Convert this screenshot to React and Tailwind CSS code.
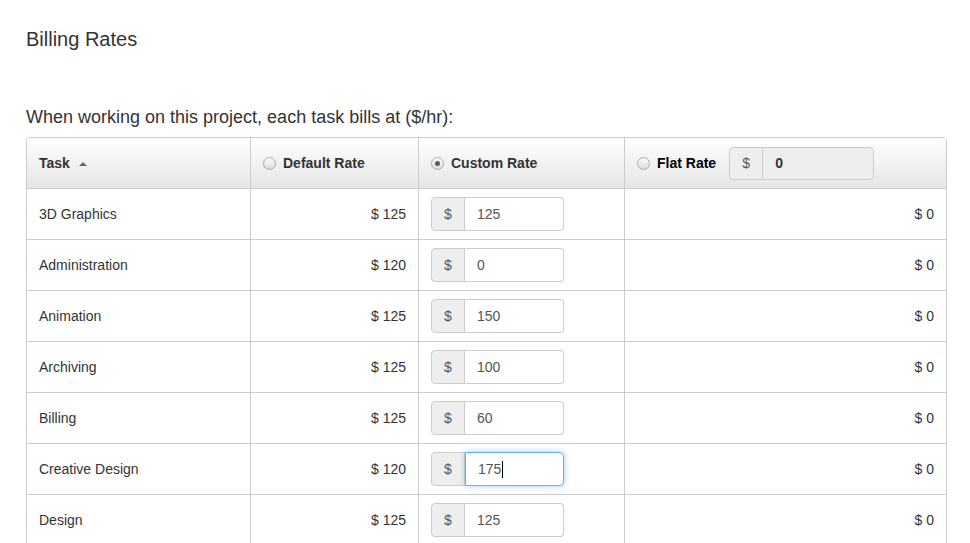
import React from 'react';

const rows = [
  { task: '3D Graphics', def: 125, custom: '125' },
  { task: 'Administration', def: 120, custom: '0' },
  { task: 'Animation', def: 125, custom: '150' },
  { task: 'Archiving', def: 125, custom: '100' },
  { task: 'Billing', def: 125, custom: '60' },
  { task: 'Creative Design', def: 120, custom: '175', focused: true },
  { task: 'Design', def: 125, custom: '125' },
];

const Radio = ({ checked }) => (
  <span className="relative inline-block w-[13px] h-[13px] rounded-full border border-[#a9a9a9] bg-gradient-to-b from-[#fbfbfb] to-[#dcdcdc] flex-shrink-0">
    {checked && <span className="absolute left-[3px] top-[3px] w-[5px] h-[5px] rounded-full bg-[#5a5a5a]" />}
  </span>
);

const Cell = ({ className = '', children }) => (
  <div className={`h-[50px] flex items-center px-3 ${className}`}>{children}</div>
);

export default function App() {
  return (
    <div className="w-[970px] h-[543px] overflow-hidden bg-white text-[#333] font-['Liberation_Sans',Arial,sans-serif]">
      <div className="pl-[26px] pt-[28px]">
        <h2 className="text-[20px] leading-[22px]">Billing Rates</h2>
        <p className="mt-[57px] text-[18px] leading-[20px]">When working on this project, each task bills at ($/hr):</p>

        <div className="mt-[10px] w-[921px] border border-[#ccc] rounded-t-[4px] overflow-hidden">
          <div className="grid grid-cols-[223px_168px_206px_322px] bg-gradient-to-b from-white to-[#e6e6e6] border-b border-[#ccc] text-[14px] font-bold">
            <Cell className="gap-[9px]">
              <span>Task</span>
              <span className="w-0 h-0 border-x-[4px] border-x-transparent border-b-[4px] border-b-[#666] mt-[1px]" />
            </Cell>
            <Cell className="border-l border-[#ccc] gap-[7px]">
              <Radio /> <span>Default Rate</span>
            </Cell>
            <Cell className="border-l border-[#ccc] gap-[7px]">
              <Radio checked /> <span>Custom Rate</span>
            </Cell>
            <Cell className="border-l border-[#ccc] gap-[7px]">
              <Radio /> <span className="text-black">Flat Rate</span>
              <div className="ml-[6px] flex h-[33px] w-[145px] border border-[#ccc] rounded-[4px] bg-[#eee] overflow-hidden">
                <span className="w-[33px] flex items-center justify-center border-r border-[#ccc] text-[#555] font-normal">$</span>
                <span className="flex items-center pl-[12px] text-[#333]">0</span>
              </div>
            </Cell>
          </div>

          {rows.map((r, i) => (
            <div key={r.task} className={`grid grid-cols-[223px_168px_206px_322px] text-[14px] ${i > 0 ? 'border-t border-[#ccc]' : ''}`}>
              <Cell>{r.task}</Cell>
              <Cell className="border-l border-[#ccc] justify-end">$ {r.def}</Cell>
              <Cell className="border-l border-[#ccc]">
                <div className="flex h-[34px] w-[133px]">
                  <span className="w-[34px] flex items-center justify-center bg-[#eee] border border-[#ccc] rounded-l-[4px] text-[#555]">$</span>
                  <span className={`flex-1 flex items-center pl-[12px] border rounded-r-[4px] text-[#555] ${r.focused ? 'border-[#66afe9] shadow-[0_0_6px_rgba(102,175,233,0.6)]' : 'border-[#ccc] border-l-0'}`}>
                    {r.custom}
                    {r.focused && <span className="ml-[1px] w-px h-[17px] bg-black" />}
                  </span>
                </div>
              </Cell>
              <Cell className="border-l border-[#ccc] justify-end">$ 0</Cell>
            </div>
          ))}
        </div>
      </div>
    </div>
  );
}
